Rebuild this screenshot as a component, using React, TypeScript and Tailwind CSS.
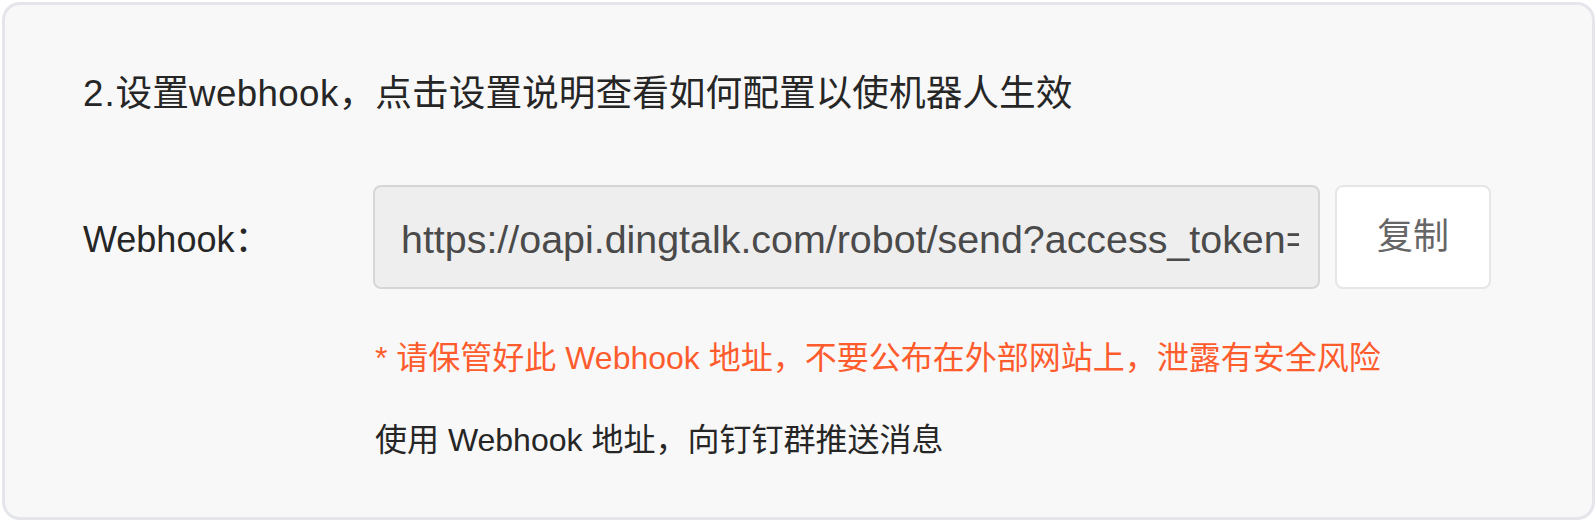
export default function App() {
  const font = { fontFamily: '"Liberation Sans", "Noto Sans CJK SC", sans-serif' };
  return (
    <div className="w-[1596px] h-[520px] bg-white pl-[2px] pt-[2px] [text-spacing-trim:space-all]" style={font}>
      {/* card */}
      <div className="w-[1593px] h-[518px] border-[3px] border-[#e5e6eb] rounded-[18px] bg-[#f8f8f8] pl-[78px] pt-[65px]">
        <div className="text-[36.7px] leading-[48px] text-[#262626]">
          <span className="tracking-[1px]">2.</span>设置<span className="tracking-[0.4px]">webhook</span>，点击设置说明查看如何配置以使机器人生效
        </div>

        <div className="mt-[67px] flex items-center">
          <div className="w-[290px] pt-[5px] text-[36px] text-[#262626]">Webhook：</div>
          <div className="w-[947px] h-[104px] border-2 border-[#d6d6d6] rounded-[8px] bg-[#eeeeee] pl-[26px] pr-[19px] pt-[5px] flex items-center">
            <div className="w-full overflow-hidden whitespace-nowrap text-[39.4px] text-[#4a4a4a]">
              https://oapi.dingtalk.com/robot/send?access_token=
            </div>
          </div>
          <div className="ml-[15px] w-[156px] h-[104px] border-2 border-[#e6e6e6] rounded-[8px] bg-white flex items-center justify-center text-[36px] text-[#666666]">
            复制
          </div>
        </div>

        <div className="ml-[292px] mt-[45px] text-[32px] leading-[48px] text-[#ff5c2e]">
          * 请保管好此 Webhook 地址，不要公布在外部网站上，泄露有安全风险
        </div>
        <div className="ml-[292px] mt-[34px] text-[32px] leading-[48px] text-[#262626]">
          使用 Webhook 地址，向钉钉群推送消息
        </div>
      </div>
    </div>
  );
}
